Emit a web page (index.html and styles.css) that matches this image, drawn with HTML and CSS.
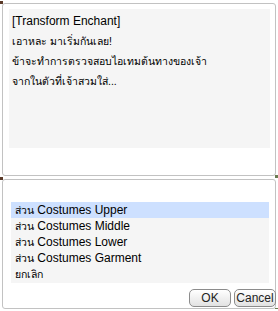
FILE: index.html
```html
<!DOCTYPE html>
<html lang="th">
  <head>
    <meta charset="utf-8">
    <meta name="viewport" content="width=device-width, initial-scale=1.0">
    <title>Transform Enchant</title>
    <link rel="stylesheet" href="styles.css">
  </head>
  <body>
    <!-- Ventana de mensaje -->
    <section class="window window-msg">
      <div class="msg-box">
        <p>[Transform Enchant]</p>
        <p class="th">เอาหละ มาเริ่มกันเลย!</p>
        <p class="th">ข้าจะทำการตรวจสอบไอเทมต้นทางของเจ้า</p>
        <p class="th">จากในตัวที่เจ้าสวมใส่...</p>
      </div>
    </section>

    <!-- Ventana de opciones -->
    <section class="window window-menu">
      <ul class="menu-list">
        <li class="selected"><span class="th">ส่วน</span> Costumes Upper</li>
        <li><span class="th">ส่วน</span> Costumes Middle</li>
        <li><span class="th">ส่วน</span> Costumes Lower</li>
        <li><span class="th">ส่วน</span> Costumes Garment</li>
        <li class="th">ยกเลิก</li>
      </ul>
      <div class="menu-buttons">
        <button class="btn btn-ok">OK</button>
        <button class="btn btn-cancel">Cancel</button>
      </div>
    </section>
  </body>
</html>
```

FILE: styles.css
```css
/* Reseteo */
* {
  margin: 0;
  padding: 0;
  box-sizing: border-box;
}

body {
  font-family: "Liberation Sans", "Noto Sans", sans-serif;
  font-size: 12px;
  color: #000;
  background: #fff;
  padding: 3px 2px 0 2px;
  width: 278px;
}

/* Texto tailandés algo más pequeño */
.th {
  font-size: 10.5px;
}

/* Ventanas */
.window {
  position: relative;
  width: 274px;
  border: 1px solid #c2c2c2;
  border-radius: 3px;
  background: #fff;
}

.window::before,
.window::after {
  content: "";
  position: absolute;
  width: 3px;
  height: 3px;
  background: #5a3a28;
}

.window::before {
  left: -3px;
  top: -3px;
}

.window::after {
  right: -3px;
  bottom: -3px;
  background: #6a7a50;
}

.window-msg {
  height: 173px;
  padding: 5px 5px 0 6px;
}

.msg-box {
  height: 139px;
  background: #f5f5f5;
  padding: 2px 3px;
}

.msg-box p {
  line-height: 20px;
  white-space: nowrap;
}

.window-menu {
  margin-top: 3px;
  height: 130px;
  padding: 22px 6px 0 8px;
}

/* Lista de opciones */
.menu-list {
  list-style: none;
  height: 81px;
  background: #f5f5f5;
}

.menu-list li {
  height: 16px;
  line-height: 16px;
  padding-left: 4px;
  white-space: nowrap;
}

.menu-list li.selected {
  background: #cde0ff;
}

/* Botones */
.menu-buttons {
  display: flex;
  justify-content: flex-end;
  gap: 3px;
  margin-top: 6px;
  margin-right: -7px;
}

.btn {
  height: 18px;
  width: 42px;
  font-family: inherit;
  font-size: 12px;
  color: #222;
  border: 1px solid #8c8c8c;
  border-radius: 5px;
  background: linear-gradient(#ffffff, #e2e2e2);
  cursor: pointer;
}
```
